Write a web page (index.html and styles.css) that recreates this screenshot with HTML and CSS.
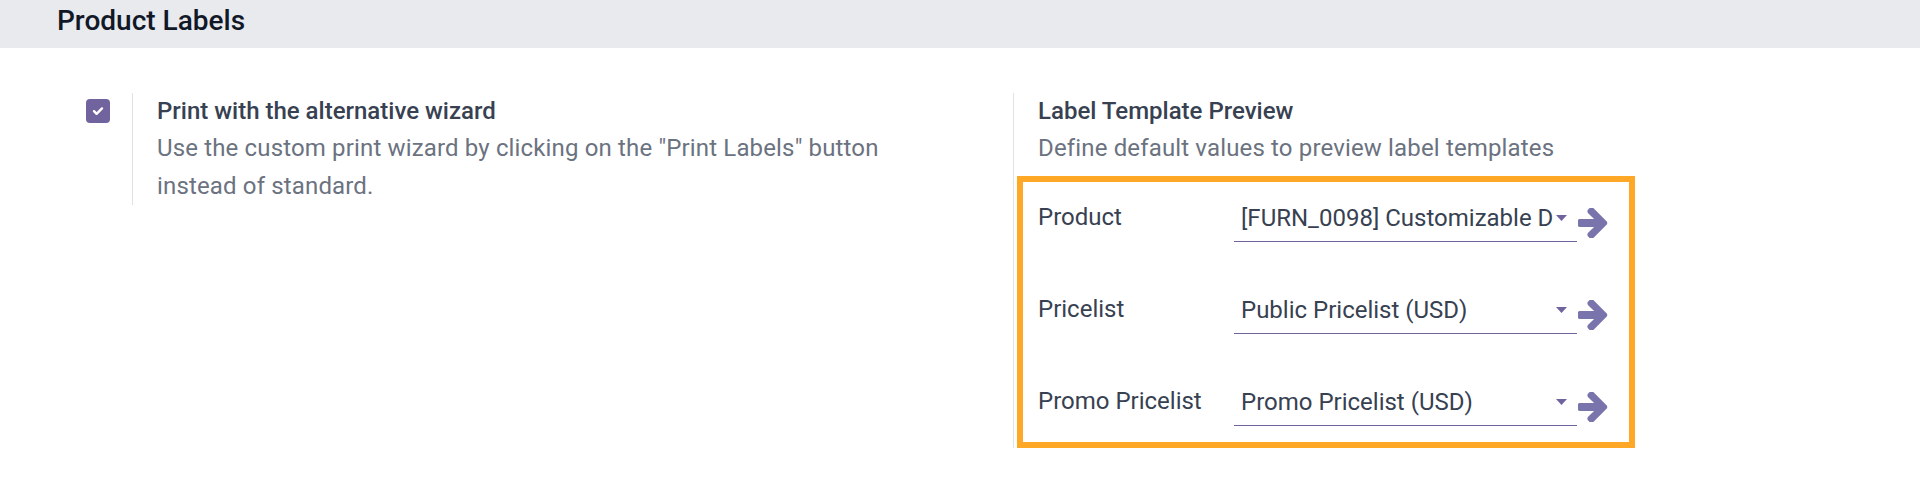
FILE: index.html
```html
<!DOCTYPE html>
<html lang="en">
<head>
    <meta charset="UTF-8">
    <meta name="viewport" content="width=device-width, initial-scale=1.0">
    <title>Product Labels - Settings</title>
    <link rel="stylesheet" href="styles.css">
</head>
<body>
    <div class="section-title">
        <h2>Product Labels</h2>
    </div>

    <div class="settings">
        <div class="setting-box">
            <div class="left-pane">
                <span class="checkbox">
                    <svg width="14" height="14" viewBox="0 0 14 14"><path d="M3 7.2l2.6 2.6L11 4.4" fill="none" stroke="#fff" stroke-width="2.4" stroke-linecap="round" stroke-linejoin="round"/></svg>
                </span>
            </div>
            <div class="right-pane">
                <div class="setting-title">Print with the alternative wizard</div>
                <div class="setting-desc">Use the custom print wizard by clicking on the "Print Labels" button instead of standard.</div>
            </div>
        </div>

        <div class="setting-box">
            <div class="left-pane"></div>
            <div class="right-pane">
                <div class="setting-title">Label Template Preview</div>
                <div class="setting-desc">Define default values to preview label templates</div>

                <div class="preview-box">
                    <div class="field-row">
                        <label>Product</label>
                        <div class="many2one">
                            <span class="value">[FURN_0098] Customizable Desk</span>
                            <svg class="caret" width="11" height="6" viewBox="0 0 11 6"><path d="M0 0h11L5.5 6z"/></svg>
                        </div>
                        <svg class="ext-arrow" width="30" height="30" viewBox="64 220 1408 1480"><path d="M1472 960q0 54-37 91l-651 651q-39 37-91 37-51 0-90-37l-75-75q-38-38-38-91t38-91l293-293h-704q-52 0-84.5-37.5t-32.5-90.5v-128q0-53 32.5-90.5t84.5-37.5h704l-293-294q-38-36-38-90t38-90l75-75q38-38 90-38 53 0 91 38l651 651q37 35 37 90z"/></svg>
                    </div>
                    <div class="field-row">
                        <label>Pricelist</label>
                        <div class="many2one">
                            <span class="value">Public Pricelist (USD)</span>
                            <svg class="caret" width="11" height="6" viewBox="0 0 11 6"><path d="M0 0h11L5.5 6z"/></svg>
                        </div>
                        <svg class="ext-arrow" width="30" height="30" viewBox="64 220 1408 1480"><path d="M1472 960q0 54-37 91l-651 651q-39 37-91 37-51 0-90-37l-75-75q-38-38-38-91t38-91l293-293h-704q-52 0-84.5-37.5t-32.5-90.5v-128q0-53 32.5-90.5t84.5-37.5h704l-293-294q-38-36-38-90t38-90l75-75q38-38 90-38 53 0 91 38l651 651q37 35 37 90z"/></svg>
                    </div>
                    <div class="field-row">
                        <label>Promo Pricelist</label>
                        <div class="many2one">
                            <span class="value">Promo Pricelist (USD)</span>
                            <svg class="caret" width="11" height="6" viewBox="0 0 11 6"><path d="M0 0h11L5.5 6z"/></svg>
                        </div>
                        <svg class="ext-arrow" width="30" height="30" viewBox="64 220 1408 1480"><path d="M1472 960q0 54-37 91l-651 651q-39 37-91 37-51 0-90-37l-75-75q-38-38-38-91t38-91l293-293h-704q-52 0-84.5-37.5t-32.5-90.5v-128q0-53 32.5-90.5t84.5-37.5h704l-293-294q-38-36-38-90t38-90l75-75q38-38 90-38 53 0 91 38l651 651q37 35 37 90z"/></svg>
                    </div>
                </div>
            </div>
        </div>
    </div>
</body>
</html>
```

FILE: styles.css
```css
body {
    margin: 0;
    font-family: Roboto, "Noto Sans", sans-serif;
    color: #374151;
    background: white;
}
.section-title {
    background-color: #e9eaee;
    height: 48px;
    padding-left: 57px;
}
.section-title h2 {
    margin: 0;
    font-size: 28px;
    font-weight: 500;
    line-height: 42px;
    color: #111827;
}
.settings {
    display: grid;
    grid-template-columns: 881px 1fr;
    padding-left: 86px;
    margin-top: 45px;
    align-items: start;
}
.setting-box {
    display: flex;
}
.left-pane {
    width: 46px;
    flex-shrink: 0;
}
.checkbox {
    display: flex;
    align-items: center;
    justify-content: center;
    width: 24px;
    height: 24px;
    margin-top: 6px;
    border-radius: 4px;
    background-color: #71639e;
}
.right-pane {
    border-left: 1px solid #dee2e6;
    padding-left: 24px;
}
.setting-title {
    font-size: 24px;
    font-weight: 500;
    line-height: 36px;
}
.setting-desc {
    font-size: 24px;
    line-height: 38px;
    color: #6b7280;
    max-width: 760px;
    letter-spacing: 0.15px;
}
.preview-box {
    box-sizing: border-box;
    width: 618px;
    margin: 9px 0 0 -21px;
    border: 6px solid #ffa726;
    padding: 12px 0 16px 15px;
    display: flex;
    flex-direction: column;
    gap: 44px;
}
.field-row {
    display: grid;
    grid-template-columns: 195px 343px 30px;
    column-gap: 1px;
    align-items: start;
    font-size: 24px;
}
.field-row label {
    line-height: 47px;
}
.many2one {
    display: flex;
    align-items: center;
    height: 47px;
    border-bottom: 1px solid #71639e;
    padding-left: 7px;
}
.many2one .value {
    flex: 1;
    overflow: hidden;
    white-space: nowrap;
}
.caret {
    flex-shrink: 0;
    margin: 0 10px 0 2px;
    fill: #71639e;
}
.ext-arrow {
    margin-top: 14px;
    fill: #7a74ad;
}
```
